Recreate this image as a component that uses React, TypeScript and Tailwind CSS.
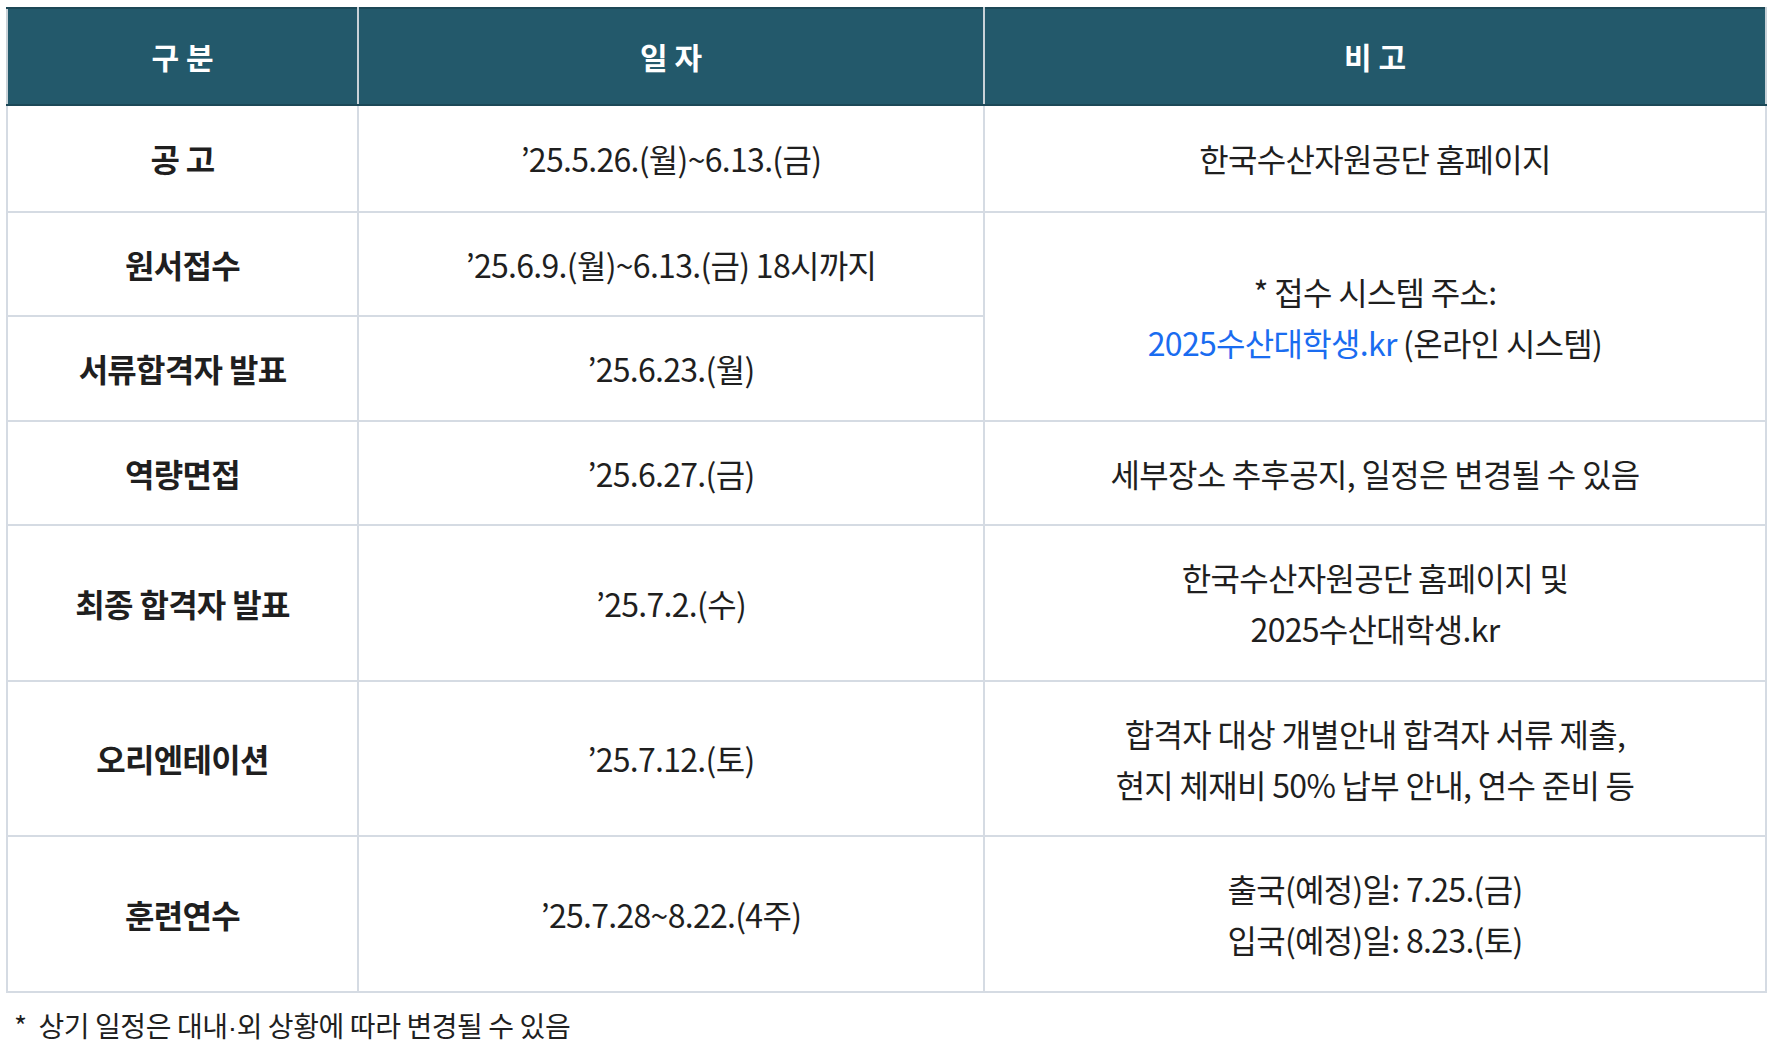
import React from "react";

type Row = {
  label: string;
  date: string;
  note?: React.ReactNode;
  noteRowSpan?: number;
  h: string;
};

const rows: Row[] = [
  { label: "공 고", date: "’25.5.26.(월)~6.13.(금)", note: "한국수산자원공단 홈페이지", h: "h-[107px]" },
  {
    label: "원서접수",
    date: "’25.6.9.(월)~6.13.(금) 18시까지",
    note: (
      <>
        <div>* 접수 시스템 주소:</div>
        <div>
          <span className="text-[#1a6cf0]">2025수산대학생.kr</span> (온라인 시스템)
        </div>
      </>
    ),
    noteRowSpan: 2,
    h: "h-[104px]",
  },
  { label: "서류합격자 발표", date: "’25.6.23.(월)", h: "h-[105px]" },
  { label: "역량면접", date: "’25.6.27.(금)", note: "세부장소 추후공지, 일정은 변경될 수 있음", h: "h-[104px]" },
  {
    label: "최종 합격자 발표",
    date: "’25.7.2.(수)",
    note: (
      <>
        <div>한국수산자원공단 홈페이지 및</div>
        <div>2025수산대학생.kr</div>
      </>
    ),
    h: "h-[156px]",
  },
  {
    label: "오리엔테이션",
    date: "’25.7.12.(토)",
    note: (
      <>
        <div>합격자 대상 개별안내 합격자 서류 제출,</div>
        <div>현지 체재비 50% 납부 안내, 연수 준비 등</div>
      </>
    ),
    h: "h-[155px]",
  },
  {
    label: "훈련연수",
    date: "’25.7.28~8.22.(4주)",
    note: (
      <>
        <div>출국(예정)일: 7.25.(금)</div>
        <div>입국(예정)일: 8.23.(토)</div>
      </>
    ),
    h: "h-[156px]",
  },
];

const cell = "border-2 border-[#d5dbe3] text-center align-middle";

export default function App() {
  return (
    <div className="min-h-screen bg-white pl-[6px] pt-[7px] font-['Noto_Sans_CJK_KR',sans-serif] text-[#1f1f1f]">
      <table className="w-[1759px] table-fixed border-collapse">
        <colgroup>
          <col className="w-[351px]" />
          <col className="w-[626px]" />
          <col className="w-[782px]" />
        </colgroup>
        <thead>
          <tr className="h-[97px] bg-[#23596b] text-[30px] font-bold text-white">
            <th className="border-2 border-[#c9d2d8] border-y-[#1c4857]">구 분</th>
            <th className="border-2 border-[#c9d2d8] border-y-[#1c4857]">일 자</th>
            <th className="border-2 border-[#c9d2d8] border-y-[#1c4857]">비 고</th>
          </tr>
        </thead>
        <tbody className="text-[32px] leading-[51px] tracking-[-0.7px]">
          {rows.map((r) => (
            <tr key={r.label} className={r.h}>
              <td className={`${cell} font-bold`}>{r.label}</td>
              <td className={cell}>{r.date}</td>
              {r.note !== undefined && (
                <td className={cell} rowSpan={r.noteRowSpan ?? 1}>
                  {r.note}
                </td>
              )}
            </tr>
          ))}
        </tbody>
      </table>
      <p className="mt-[11px] pl-[8px] text-[28px] tracking-[-0.4px] whitespace-pre">
        {"*  상기 일정은 대내"}
        <span className="font-['Liberation_Sans',sans-serif]">·</span>
        {"외 상황에 따라 변경될 수 있음"}
      </p>
    </div>
  );
}
